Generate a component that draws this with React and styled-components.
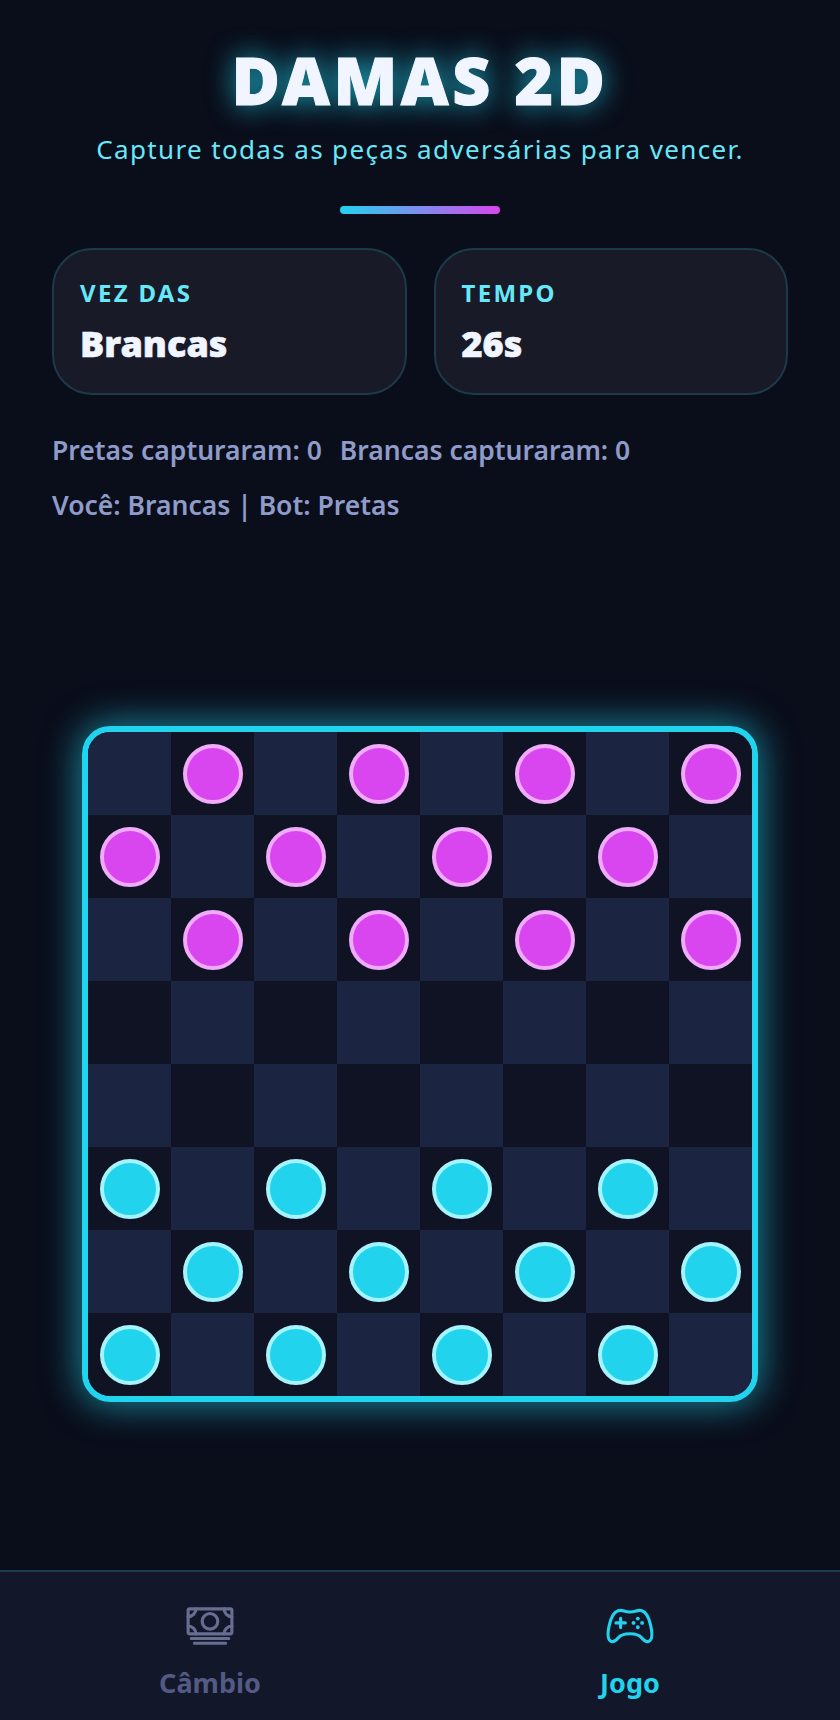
import styled, { createGlobalStyle } from "styled-components";
import { IoCashOutline, IoGameControllerOutline } from "react-icons/io5";

const GlobalStyle = createGlobalStyle`
  * {
    box-sizing: border-box;
  }
  body {
    margin: 0;
    background: #0a0d1a;
    font-family: "Noto Sans", "Open Sans", sans-serif;
  }
`;

const Page = styled.div`
  width: 840px;
  height: 1720px;
  display: flex;
  flex-direction: column;
  background: #0a0d1a;
`;

const Main = styled.main`
  flex: 1;
  display: flex;
  flex-direction: column;
  padding: 39px 52px 0;
`;

const Header = styled.header`
  display: flex;
  flex-direction: column;
  align-items: center;
`;

const Title = styled.h1`
  margin: 0;
  font-size: 66px;
  line-height: 80px;
  font-weight: 900;
  letter-spacing: 3.5px;
  color: #f1f5ff;
  -webkit-text-stroke: 1px #f1f5ff;
  text-shadow: 0 0 28px rgba(34, 211, 238, 0.85);
`;

const Subtitle = styled.p`
  margin: 12px 0 0;
  font-size: 26px;
  line-height: 36px;
  letter-spacing: 1.35px;
  color: #67e8f9;
`;

const Divider = styled.div`
  width: 160px;
  height: 8px;
  margin-top: 39px;
  border-radius: 4px;
  background: linear-gradient(90deg, #22d3ee, #d946ef);
`;

const Cards = styled.section`
  display: grid;
  grid-template-columns: 1fr 1fr;
  gap: 27px;
  margin-top: 34px;
`;

const Card = styled.div`
  height: 147px;
  padding: 28px 26px;
  border: 2px solid #1c3a48;
  border-radius: 40px;
  background: #181b27;
`;

const CardLabel = styled.div`
  font-size: 24px;
  line-height: 30px;
  font-weight: 700;
  letter-spacing: 2.3px;
  color: #67e8f9;
`;

const CardValue = styled.div`
  margin-top: 12px;
  font-size: 36px;
  line-height: 48px;
  font-weight: 900;
  color: #f1f5ff;
  -webkit-text-stroke: 0.6px #f1f5ff;
`;

const Stats = styled.div`
  display: flex;
  gap: 18px;
  margin-top: 37px;
`;

const Info = styled.div`
  font-size: 26.5px;
  line-height: 36px;
  font-weight: 600;
  color: #8f9cc9;
`;

const PlayerInfo = styled(Info)`
  margin-top: 19px;
`;

const BoardArea = styled.div`
  flex: 1;
  display: flex;
  justify-content: center;
  padding-top: 203px;
`;

const Board = styled.div`
  width: 676px;
  height: 676px;
  display: grid;
  grid-template-columns: repeat(8, 1fr);
  grid-template-rows: repeat(8, 1fr);
  overflow: hidden;
  border: 6px solid #22d3ee;
  border-radius: 28px;
  box-shadow: 0 0 36px 3px rgba(34, 211, 238, 0.6);
`;

const Square = styled.div`
  display: flex;
  align-items: center;
  justify-content: center;
  background: ${(p) => (p.$light ? "#1b2440" : "#0f1324")};
`;

const Piece = styled.div`
  width: 60px;
  height: 60px;
  border-radius: 50%;
  border: 4px solid ${(p) => (p.$color === "pink" ? "#f0abfc" : "#a5f3fc")};
  background: ${(p) => (p.$color === "pink" ? "#d946ef" : "#22d3ee")};
`;

const Nav = styled.nav`
  height: 150px;
  display: grid;
  grid-template-columns: 1fr 1fr;
  border-top: 2px solid #1c3a4e;
  background: #12172a;
`;

const NavItem = styled.div`
  display: flex;
  flex-direction: column;
  align-items: center;
  padding-top: 29px;
  color: ${(p) => (p.$active ? "#22d3ee" : "#535b85")};
  font-size: 27px;
  line-height: 36px;
  font-weight: 700;
  svg {
    width: 50px;
    height: 50px;
    margin-bottom: 14px;
    color: ${(p) => (p.$active ? "#22d3ee" : "#676e92")};
  }
`;

const pieceAt = (row, col) => {
  if ((row + col) % 2 === 0) return null;
  if (row < 3) return "pink";
  if (row > 4) return "cyan";
  return null;
};

const squares = [];
for (let row = 0; row < 8; row++) {
  for (let col = 0; col < 8; col++) {
    squares.push({ row, col, piece: pieceAt(row, col) });
  }
}

export default function App() {
  return (
    <Page>
      <GlobalStyle />
      <Main>
        <Header>
          <Title>DAMAS 2D</Title>
          <Subtitle>Capture todas as peças adversárias para vencer.</Subtitle>
          <Divider />
        </Header>
        <Cards>
          <Card>
            <CardLabel>VEZ DAS</CardLabel>
            <CardValue>Brancas</CardValue>
          </Card>
          <Card>
            <CardLabel>TEMPO</CardLabel>
            <CardValue>26s</CardValue>
          </Card>
        </Cards>
        <Stats>
          <Info>Pretas capturaram: 0</Info>
          <Info>Brancas capturaram: 0</Info>
        </Stats>
        <PlayerInfo>Você: Brancas | Bot: Pretas</PlayerInfo>
        <BoardArea>
          <Board>
            {squares.map((s) => (
              <Square key={`${s.row}-${s.col}`} $light={(s.row + s.col) % 2 === 0}>
                {s.piece && <Piece $color={s.piece} />}
              </Square>
            ))}
          </Board>
        </BoardArea>
      </Main>
      <Nav>
        <NavItem>
          <IoCashOutline />
          Câmbio
        </NavItem>
        <NavItem $active>
          <IoGameControllerOutline />
          Jogo
        </NavItem>
      </Nav>
    </Page>
  );
}
